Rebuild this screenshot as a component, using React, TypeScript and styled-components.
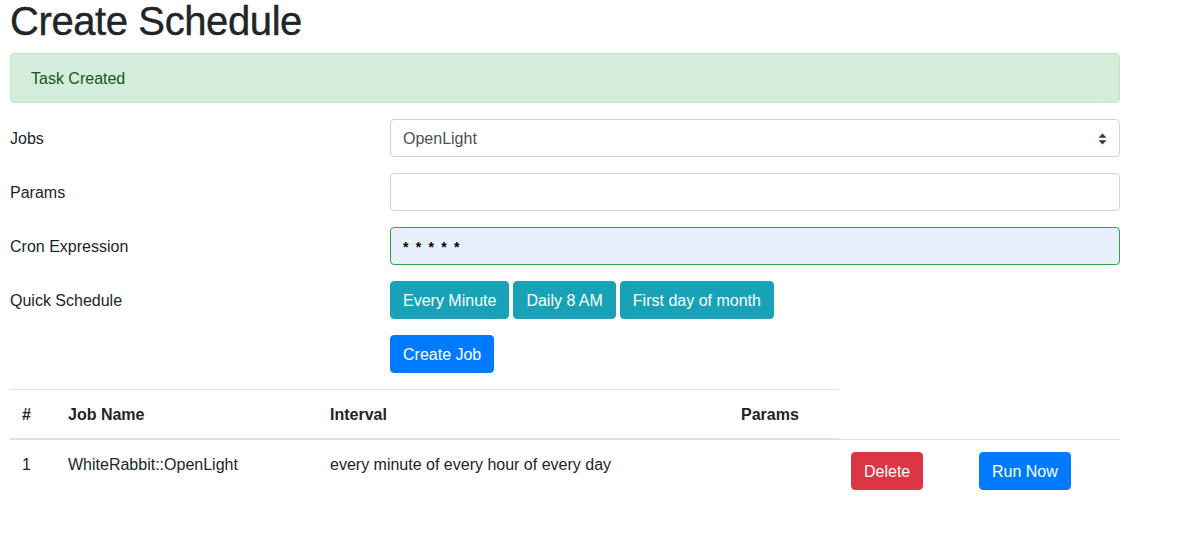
import React from "react";
import styled, { createGlobalStyle } from "styled-components";

const Global = createGlobalStyle`
  html, body { margin: 0; padding: 0; background: #fff; }
  body {
    font-family: "Liberation Sans", Arial, sans-serif;
    font-size: 16px;
    line-height: 24px;
    color: #212529;
  }
  * { box-sizing: border-box; }
`;

const Page = styled.div`
  width: 1110px;
  margin-left: 10px;
`;

const Title = styled.h1`
  margin: 0 0 11px;
  font-size: 40px;
  font-weight: 500;
  line-height: 42px;
  letter-spacing: -0.4px;
  -webkit-text-stroke: 0.4px #212529;
`;

const Alert = styled.div`
  background: #d4edda;
  border: 1px solid #c3e6cb;
  color: #155724;
  border-radius: 4px;
  padding: 13px 20px 11px;
  margin-bottom: 16px;
`;

const FormRow = styled.div`
  display: grid;
  grid-template-columns: 380px 730px;
  margin-bottom: 16px;
`;

const Label = styled.label`
  padding: 8px 0 6px;
`;

const Field = styled.div<{ $valid?: boolean }>`
  position: relative;
  height: 38px;
  border: 1px solid ${(p) => (p.$valid ? "#28a745" : "#ced4da")};
  background: ${(p) => (p.$valid ? "#e8f0fe" : "#fff")};
  border-radius: 4px;
  padding: 7px 12px 5px;
  color: #495057;
  display: flex;
  align-items: center;
`;

const Stars = styled.span`
  color: #000;
  font-size: 14px;
  font-weight: 700;
  letter-spacing: 1.7px;
`;

const Arrows = styled.svg`
  position: absolute;
  right: 12px;
  top: 13px;
`;

const Buttons = styled.div`
  display: flex;
  gap: 4px;
`;

const Button = styled.button<{ $bg: string }>`
  font-family: inherit;
  font-size: 16px;
  line-height: 24px;
  color: #fff;
  background: ${(p) => p.$bg};
  border: 1px solid ${(p) => p.$bg};
  border-radius: 4px;
  padding: 7px 12px 5px;
  cursor: pointer;
`;

const Table = styled.table`
  width: 1110px;
  border-collapse: collapse;
  table-layout: fixed;
`;

const Col = styled.col<{ $w: number }>`
  width: ${(p) => p.$w}px;
`;

const Th = styled.th`
  text-align: left;
  font-weight: 700;
  padding: 13px 12px 11px;
  border-top: 1px solid #dee2e6;
  border-bottom: 2px solid #dee2e6;
  vertical-align: bottom;
`;

const Td = styled.td`
  padding: 13px 12px 11px;
  border-top: 1px solid #dee2e6;
  vertical-align: top;
`;

const ActionTd = styled(Td)`
  padding: 12px;
`;

export default function App() {
  return (
    <>
      <Global />
      <Page>
        <Title>Create Schedule</Title>
        <Alert>Task Created</Alert>
        <FormRow>
          <Label>Jobs</Label>
          <Field>
            OpenLight
            <Arrows width="9" height="12" viewBox="0 0 9 12">
              <path d="M4.5 0.5 L8.5 4.8 L0.5 4.8 Z" fill="#343a40" />
              <path d="M4.5 11.5 L8.5 7.2 L0.5 7.2 Z" fill="#343a40" />
            </Arrows>
          </Field>
        </FormRow>
        <FormRow>
          <Label>Params</Label>
          <Field />
        </FormRow>
        <FormRow>
          <Label>Cron Expression</Label>
          <Field $valid>
            <Stars>* * * * *</Stars>
          </Field>
        </FormRow>
        <FormRow>
          <Label>Quick Schedule</Label>
          <Buttons>
            <Button $bg="#17a2b8">Every Minute</Button>
            <Button $bg="#17a2b8">Daily 8 AM</Button>
            <Button $bg="#17a2b8">First day of month</Button>
          </Buttons>
        </FormRow>
        <FormRow>
          <span />
          <Buttons>
            <Button $bg="#007bff">Create Job</Button>
          </Buttons>
        </FormRow>
        <Table>
          <colgroup>
            <Col $w={46} />
            <Col $w={262} />
            <Col $w={411} />
            <Col $w={110} />
            <Col $w={128} />
            <Col $w={153} />
          </colgroup>
          <thead>
            <tr>
              <Th>#</Th>
              <Th>Job Name</Th>
              <Th>Interval</Th>
              <Th>Params</Th>
            </tr>
          </thead>
          <tbody>
            <tr>
              <Td>1</Td>
              <Td>WhiteRabbit::OpenLight</Td>
              <Td>every minute of every hour of every day</Td>
              <Td></Td>
              <ActionTd>
                <Button $bg="#dc3545">Delete</Button>
              </ActionTd>
              <ActionTd>
                <Button $bg="#007bff">Run Now</Button>
              </ActionTd>
            </tr>
          </tbody>
        </Table>
      </Page>
    </>
  );
}
